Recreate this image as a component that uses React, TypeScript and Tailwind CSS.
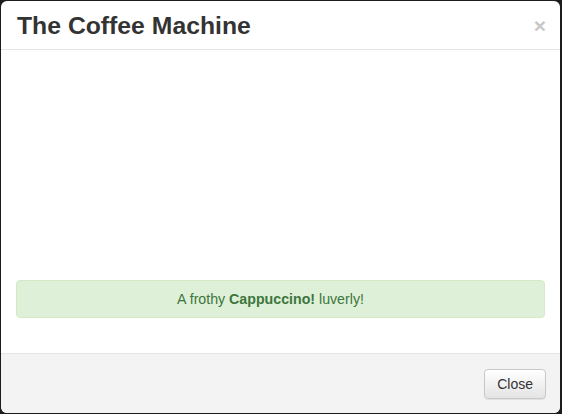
export default function App() {
  return (
    <div className="h-[414px] w-[562px] bg-[#1c1c1c] pl-px pt-px pr-[2px] pb-px font-['Liberation_Sans',Arial,sans-serif] text-[#333]">
      <div className="flex h-full flex-col overflow-hidden rounded-[6px] bg-white">
        {/* Header */}
        <div className="flex h-[49px] shrink-0 items-center justify-between border-b border-[#e5e5e5] pl-[16px] pr-[14px]">
          <h3 className="pt-[1px] text-[24.75px] font-bold leading-[26px] text-[#333]">
            The Coffee Machine
          </h3>
          <button className="text-[21px] font-bold leading-none text-[#c8c8c8]">
            ×
          </button>
        </div>

        {/* Body */}
        <div className="flex flex-1 flex-col justify-end px-[15px] pb-[35px]">
          <div className="rounded-[4px] border border-[#d6e9c6] bg-[#dff0d8] py-[8px] pl-[15px] pr-[35px] text-center text-[14.2px] leading-[20px] text-[#3c763d]">
            A frothy <strong className="font-bold">Cappuccino!</strong> luverly!
          </div>
        </div>

        {/* Footer */}
        <div className="flex h-[60px] shrink-0 items-center justify-end border-t border-[#e5e5e5] bg-[#f3f3f3] pr-[14px]">
          <button className="h-[30px] rounded-[4px] border border-[#c8c8c8] bg-gradient-to-b from-white to-[#e4e4e4] px-[12px] text-[14px] leading-[20px] text-[#333] shadow-[0_1px_1px_rgba(0,0,0,0.075)]">
            Close
          </button>
        </div>
      </div>
    </div>
  );
}
